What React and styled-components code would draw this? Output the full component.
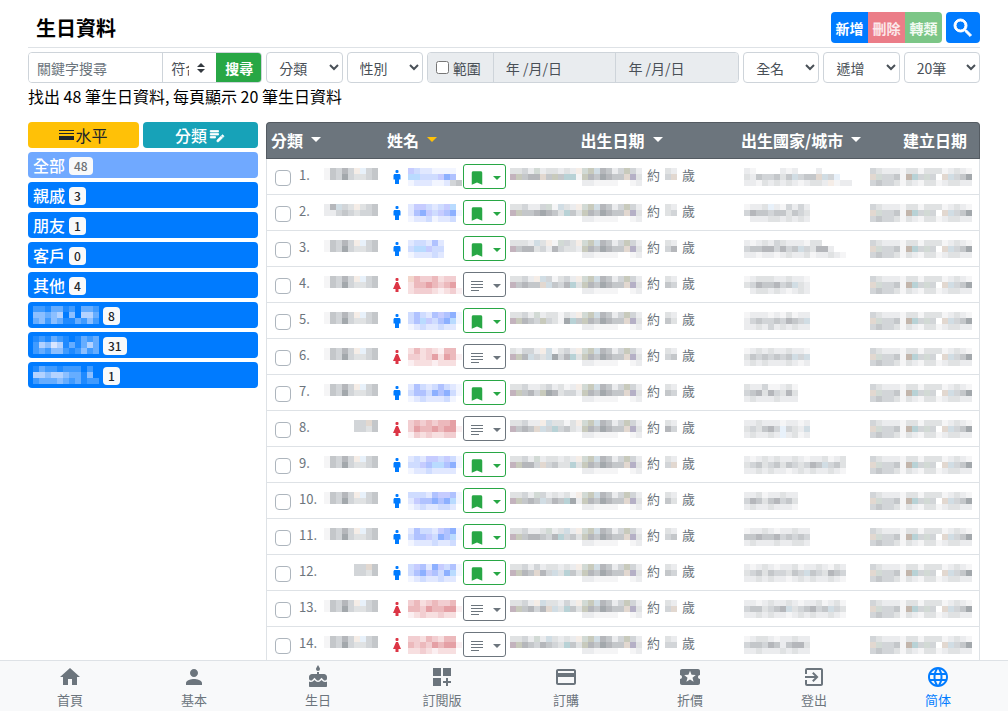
import styled, { createGlobalStyle, css } from "styled-components";
import {
  MdBookmark,
  MdCake,
  MdCreditCard,
  MdEditNote,
  MdExitToApp,
  MdHome,
  MdLanguage,
  MdLocalActivity,
  MdPerson,
  MdSearch,
} from "react-icons/md";

const GlobalStyle = createGlobalStyle`
  *, *::before, *::after {
    box-sizing: border-box;
  }

  body {
    margin: 0;
    background: #fff;
    color: #212529;
    font-family: "Noto Sans CJK TC", "Noto Sans", sans-serif;
    font-size: 16px;
    line-height: 24px;
  }

  button, input, select {
    font-family: inherit;
    margin: 0;
  }
`;

/* ---------- Layout ---------- */

const Page = styled.div`
  display: flex;
  flex-direction: column;
  height: 100vh;
`;

const Main = styled.main`
  flex: 1;
  min-height: 0;
  padding: 12px 28px 0;
  overflow-y: auto;
  scrollbar-width: none;
`;

const Header = styled.header`
  display: flex;
  align-items: center;
  gap: 4px;
  padding-bottom: 4px;
  border-bottom: 1px solid #dee2e6;
`;

const Title = styled.h1`
  flex: 1;
  margin: 0;
  padding-left: 8px;
  color: #000;
  font-size: 20px;
  font-weight: 700;
  line-height: 31px;
`;

const Content = styled.div`
  display: flex;
  align-items: flex-start;
  gap: 8px;
`;

/* ---------- Buttons ---------- */

const ButtonGroup = styled.div`
  display: flex;
  border-radius: 4px;
  overflow: hidden;
`;

/* Slightly heavier strokes; the icon's empty bounding path stays unstroked */
const boldIcon = css`
  & svg {
    stroke: none;
  }

  & svg path:not([fill="none"]) {
    stroke: currentColor;
    stroke-width: 1px;
  }
`;

const tones = {
  primary: css`
    background: #007bff;
    color: #fff;
  `,
  danger: css`
    background: #eb7d88;
    color: #fbe9eb;
  `,
  success: css`
    background: #7cc687;
    color: #f1faf2;
  `,
};

const ToolButton = styled.button`
  display: flex;
  align-items: center;
  justify-content: center;
  width: 37px;
  height: 31px;
  padding: 0;
  border: 0;
  font-size: 14px;
  font-weight: 700;
  ${(props) => tones[props.$tone]}

  ${ButtonGroup} & + & {
    border-left: 1px solid rgba(90, 90, 90, 0.3);
  }
`;

const SearchButton = styled(ToolButton)`
  width: 34px;
  border-radius: 4px;
  ${boldIcon}
`;

/* ---------- Filters ---------- */

const Filters = styled.form`
  display: flex;
  gap: 4px;
  margin-top: 4px;
`;

const InputGroup = styled.div`
  display: flex;
  flex: 1 1 ${(props) => props.$basis}px;
  min-width: 0;
  border: 1px solid #ced4da;
  border-radius: 4px;
  overflow: hidden;
`;

const TextInput = styled.input`
  flex: 1;
  min-width: 0;
  height: 29px;
  padding: 0 8px;
  border: 0;
  font-size: 14px;

  &::placeholder {
    color: #6c757d;
    opacity: 1;
  }
`;

const MatchSelect = styled.select`
  width: 55px;
  height: 29px;
  padding: 0 28px 0 8px;
  border: 0;
  border-left: 1px solid #ced4da;
  appearance: none;
  color: #495057;
  font-size: 14px;
  background: #fff
    url("data:image/svg+xml,%3csvg xmlns='http://www.w3.org/2000/svg' viewBox='0 0 4 5'%3e%3cpath fill='%23343a40' d='M2 0L0 2h4zm0 5L0 3h4z'/%3e%3c/svg%3e")
    no-repeat right 12px center / 8px 10px;
`;

const SubmitButton = styled.button`
  width: 46px;
  margin: -1px;
  border: 0;
  background: #28a745;
  color: #fff;
  font-size: 14px;
  font-weight: 700;
`;

const FilterSelect = styled.select`
  flex: 1 1 76px;
  min-width: 0;
  height: 31px;
  padding: 0 0 0 8px;
  border: 1px solid #ced4da;
  border-radius: 4px;
  background: #fff;
  color: #495057;
  font-size: 14px;
`;

const RangeLabel = styled.label`
  display: flex;
  align-items: center;
  gap: 4px;
  padding: 0 12px 0 8px;
  background: #e9ecef;
  color: #495057;
  font-size: 14px;

  & input {
    width: 13px;
    height: 13px;
  }
`;

const DateInput = styled.input`
  flex: 1;
  min-width: 0;
  height: 29px;
  padding: 0 12px;
  border: 0;
  border-left: 1px solid #ced4da;
  background: #e9ecef;
  color: #495057;
  font-size: 14px;
`;

const Summary = styled.p`
  margin: 1px 0 14px;
  color: #000;
`;

/* ---------- Sidebar ---------- */

const Sidebar = styled.aside`
  display: flex;
  flex: none;
  flex-direction: column;
  gap: 4px;
  width: 230px;
`;

const SidebarTools = styled.div`
  display: grid;
  grid-template-columns: 111px 1fr;
  gap: 4px;
`;

const SidebarTool = styled.button`
  display: flex;
  align-items: center;
  justify-content: center;
  gap: 1px;
  height: 26px;
  padding: 0;
  border: 0;
  border-radius: 4px;
  background: ${(props) => props.$bg};
  color: ${(props) => props.$color};
  font-size: 16px;
  font-weight: ${(props) => props.$weight};
  ${(props) => props.$weight > 400 && boldIcon}
`;

const Category = styled.button`
  display: flex;
  align-items: center;
  gap: 4px;
  height: 26px;
  padding: 0 5px;
  border: 0;
  border-radius: 4px;
  background: ${(props) => (props.$active ? "#70a9ff" : "#007bff")};
  color: #fff;
  font-size: 16px;
  font-weight: 500;
  line-height: 26px;
`;

const Badge = styled.span`
  margin-top: 2px;
  padding: 0 5px;
  border-radius: 4px;
  background: #f8f9fa;
  color: ${(props) => (props.$active ? "#6b6f73" : "#212529")};
  font-size: 12px;
  font-weight: 500;
  line-height: 18px;
`;

/* ---------- Table ---------- */

const Table = styled.table`
  flex: 1;
  min-width: 0;
  border-collapse: separate;
  border-spacing: 0;
  table-layout: fixed;
`;

const Col = styled.col`
  width: ${(props) => props.$width};
`;

const Th = styled.th`
  height: 37px;
  padding: 0 ${(props) => props.$right ?? 4}px 2px 4px;
  border-top: 1px solid #545b62;
  border-bottom: 1px solid #545b62;
  background: #6c757d;
  color: #fff;
  font-weight: 700;
  text-align: ${(props) => props.$align ?? "left"};
  white-space: nowrap;

  &:first-child {
    border-left: 1px solid #545b62;
    border-top-left-radius: 4px;
  }

  &:last-child {
    border-right: 1px solid #545b62;
    border-top-right-radius: 4px;
  }
`;

const SortButton = styled.button`
  display: inline-flex;
  align-items: center;
  gap: 8px;
  padding: 0;
  border: 0;
  background: none;
  color: inherit;
  font-size: 16px;
  font-weight: 700;
  line-height: 24px;
`;

const Caret = styled.span`
  border: ${(props) => props.$size}px solid transparent;
  border-top-color: ${(props) => props.$color ?? "currentColor"};
  border-bottom: 0;
`;

const Td = styled.td`
  height: 36px;
  padding: 0 0 0 ${(props) => props.$left}px;
  border-bottom: 1px solid #dee2e6;
  color: #6c757d;
  font-size: 13px;

  &:first-child {
    border-left: 1px solid #dee2e6;
  }

  &:last-child {
    border-right: 1px solid #dee2e6;
  }
`;

const Cell = styled.div`
  display: flex;
  align-items: center;
  gap: ${(props) => props.$gap ?? 0}px;
  height: 35px;
`;

const RowCheckbox = styled.input`
  appearance: none;
  width: 16px;
  height: 16px;
  margin: 3px 8px 0 0;
  border: 1px solid #adb5bd;
  border-radius: 4px;
  background: #fff;
`;

const RowNumber = styled.label`
  width: 25px;
  padding-bottom: 4px;
  line-height: 20px;
`;

const AgeText = styled.span`
  padding-bottom: 4px;
  line-height: 20px;
`;

const NameCell = styled(Cell)`
  & > svg:first-child {
    margin-right: 4px;
  }
`;

const MenuButton = styled.button`
  display: flex;
  align-items: center;
  gap: 7px;
  height: 25px;
  margin-left: 1px;
  padding: 2px 4px 0;
  border: 1px solid;
  border-radius: 3px;
  background: #fff;
  color: ${(props) => (props.$saved ? "#28a745" : "#6c757d")};
`;

const Pixels = styled.svg`
  display: block;
  flex: none;
`;

/* ---------- Bottom navigation ---------- */

const BottomNav = styled.nav`
  display: flex;
  flex: none;
  padding: 4px 8px 0;
  border-top: 1px solid #dee2e6;
  background: #f8f9fa;
`;

const NavLink = styled.a`
  display: flex;
  flex: 1;
  flex-direction: column;
  align-items: center;
  color: ${(props) => (props.$active ? "#007bff" : "#6c757d")};
  font-size: 13px;
  line-height: 22px;
  text-decoration: none;
`;

/* ---------- Masked values ---------- */

const palette = {
  a: "#f5f5f6",
  b: "#ebecee",
  c: "#e0e2e3",
  d: "#d2d5d8",
  e: "#c4c7ca",
  f: "#b5b7bb",
  g: "#a3a8ac",
  w: "#f5ede7",
  v: "#e2d8d0",
  u: "#c3b6ac",
  s: "#e8f1fa",
  t: "#d1dde4",
  r: "#b8d2d6",
  p: "#c3b3bd",
  q: "#b5b0c6",
  n: "#c8cabc",
  m: "#d2dad5",
  1: "#f2f5ff",
  2: "#e1e8ff",
  3: "#cfdcff",
  4: "#c6ccff",
  5: "#b0c2ff",
  6: "#8db0ff",
  7: "#b9dbff",
  A: "#fbeff1",
  B: "#f7dfe0",
  C: "#f2ced1",
  D: "#ecb9bc",
  E: "#e5a0a5",
  F: "#f3d6cc",
  h: "#1f8aff",
  i: "#409bff",
  j: "#66adff",
  k: "#8cbfff",
  l: "#b3d2ff",
  o: "#d9e6ff",
};

const CELL = 6;

function Mosaic({ lines }) {
  return (
    <Pixels
      width={lines[0].length * CELL}
      height={3 * CELL}
      shapeRendering="crispEdges"
      aria-hidden="true"
    >
      {lines.map((line, y) =>
        [...line].map(
          (key, x) =>
            palette[key] && (
              <rect
                key={`${x}-${y}`}
                x={x * CELL}
                y={y * CELL}
                width={CELL}
                height={CELL}
                fill={palette[key]}
              />
            )
        )
      )}
    </Pixels>
  );
}

/* ---------- Icons ---------- */

function PersonIcon({ female }) {
  return (
    <Pixels width="14" height="16" viewBox="0 0 14 16" aria-hidden="true">
      <rect
        x="5.5"
        y="1"
        width="3"
        height="3"
        rx="1"
        fill={female ? "#dc3545" : "#007bff"}
      />
      {female ? (
        <path fill="#dc3545" d="M6 5h2l3 7H8.500v3h-3v-3H3z" />
      ) : (
        <path
          fill="#007bff"
          d="M5 5h4c.9 0 1.500.6 1.500 1.500V10.500H9V15H5v-4.500H3.500V6.500C3.500 5.600 4.100 5 5 5z"
        />
      )}
    </Pixels>
  );
}

function LinesIcon() {
  return (
    <Pixels width="18" height="18" shapeRendering="crispEdges" aria-hidden="true">
      <path
        fill="currentColor"
        d="M3 4h12v1H3zM3 7h12v1H3zM3 10h12v1H3zM3 13h8v1H3z"
      />
    </Pixels>
  );
}

function WeightIcon() {
  return (
    <Pixels width="15" height="12" shapeRendering="crispEdges" aria-hidden="true">
      <path fill="currentColor" d="M0 1h15v1H0zM0 4h15v1H0zM0 7h15v4H0z" />
    </Pixels>
  );
}

function WidgetsAddIcon() {
  return (
    <svg width="24" height="24" viewBox="0 0 24 24" fill="currentColor" aria-hidden="true">
      <path d="M3 3h8v8H3zM13 3h8v8h-8zM3 13h8v8H3zM18 13h-2v3h-3v2h3v3h2v-3h3v-2h-3z" />
    </svg>
  );
}

/* ---------- Data ---------- */

const categories = [
  { name: "全部", count: 48, active: true },
  { name: "親戚", count: 3 },
  { name: "朋友", count: 1 },
  { name: "客戶", count: 0 },
  { name: "其他", count: 4 },
  { mask: ["iihjjhi.jji", "kkjkl.k.llj", "jkikjhhjiki"], count: 8 },
  { mask: ["hihjih.hjij", "ilkolhjhjlj", "ijikkihikij"], count: 31 },
  { mask: ["hjiihiii.i.", "llkllkjjhk.", "ijjjkjijhii"], count: 1 },
];

const groupLong = ["aedfdwsde", "aedgdccde"];
const groupAlt = ["bftdcwcde", "bbdedcdde"];
const groupShort = [".....ddve", ".....ddce"];

const dateTail = ["mntfebdndb", "nfegfeevqc", "bbaaaa..ab"];
const created = ["dcbbbaccacccabcba", "vmddeaurdmd.vtdeg", "deddcacbaccabccbb"];

const people = [
  {
    group: groupLong,
    name: ["43221111.", "77333465.", "1222112de"],
    date: ["ccdbmbccbcbw", "pneffvenerra"],
    age: ["cb", "dv"],
    place: ["ba....bab...b.....", "cbeddecetdeevtds..", "bbacbcbcbabccbwabb"],
  },
  {
    group: groupAlt,
    name: ["24432347.", "256434561", "12231223."],
    date: ["ccdbbdmatcbw", "pneefgfecrec"],
    age: ["cb", "cd"],
    place: ["abbcsbadbdb", "dfeedeecedc", ".bbbccbcbcb"],
  },
  {
    group: groupLong,
    name: ["233252...", "377433...", "122232..."],
    date: ["cccbtcwamdcw", "peffcdbfdccb"],
    age: ["cb", "df"],
    place: ["babcbdcbbbacc....", "deeffdfdetdcffb..", "bbabbabcbbcabbcba"],
  },
  {
    group: groupLong,
    female: true,
    name: ["FDCCDBCC.", "BDDEDCDE.", "BCCCBABCA"],
    date: ["ccdbwtdacdbw", "pefeevtedfrc"],
    age: ["cb", "ed"],
    place: ["abcccbbcbba", "cdfeefdetcb", ".bccbcbabcb"],
  },
  {
    group: groupLong,
    name: ["353254561", "357435671", "12322322."],
    date: ["ccdbmbccacbw", "pnfedndcagre"],
    age: ["cb", "ec"],
    place: ["abbbabacabb", "bdeddedfedt", "bbcbdbcbcbb"],
  },
  {
    group: groupLong,
    female: true,
    name: ["BDBCBADD.", "CCBCEBEDA", "ABBBABBB."],
    date: ["cbddbwtacdbw", "pnftdctgdfrc"],
    age: ["cb", "de"],
    place: ["abcbcbbcbba", "cedededetdt", "bcbcbbbcbab"],
  },
  {
    group: groupLong,
    name: ["253235321", "355365631", "12322231."],
    date: ["ccdbbcdbcabw", "pnefdngfcddb"],
    age: ["cb", "ed"],
    place: ["cbbdaabca", "defcfdcfc", "bcbbbcbbb"],
  },
  {
    group: groupShort,
    female: true,
    name: ["CDCDCDDE.", "CEDDEDEEA", "ACBCBBCC."],
    date: ["ccdbbwtccacw", "pefevtdrdecb"],
    age: ["cb", "fd"],
    place: ["bbcbbbabbab", "cdcefdsdcbt", "bcbbcbsbcab"],
  },
  {
    group: groupLong,
    name: ["232443431", "334577561", "12232222."],
    date: ["ccdbmbccbcbw", "pnffdvdeccrc"],
    age: ["cb", "dv"],
    place: ["babcbcbbcbabbcabc", "cdecdecedcdfetdec", "bbcbcbbabcbcbbcba"],
  },
  {
    group: groupLong,
    name: ["333254451", "245565671", "12322332."],
    date: ["ccdbmdbcbcaw", "pnefetdfergb"],
    age: ["cb", "ec"],
    place: ["bbcabbcbb", "dfecefdec", "bcbbcbbba"],
  },
  {
    group: groupLong,
    name: ["253324561", "355436571", "12223223."],
    date: ["ccdbbcmbctbw", "pneffedfrdec"],
    age: ["cb", "de"],
    place: ["abbcbabbcbb", "eefeefdeded", "bcbbbcbbccb"],
  },
  {
    group: groupShort,
    name: ["345264351", "356453671", "12322322."],
    date: ["ccdbdbccbcbw", "pnfevfdtcrec"],
    age: ["cb", "ed"],
    place: ["babcbabbcabbcbacb", "cdeceddcedtedcfed", "bbcbcbbabcbcbbcba"],
  },
  {
    group: groupLong,
    female: true,
    name: ["CDBCDCCD.", "DDCEDDEEA", "ABCBBCBB."],
    date: ["ccdbwtccbdbw", "pnefdfvtcrec"],
    age: ["cb", "dv"],
    place: ["bbabcbbcbabbcabca", "deecdeftcdefdetdc", "bbcbcbbabcbcbbcba"],
  },
  {
    group: groupLong,
    female: true,
    name: ["CCBDCBDD.", "DCDCEDEEA", "BBCBABBB."],
    date: ["ccdbmbtcbcbw", "pnfedfedcrec"],
    age: ["cb", "dd"],
    place: ["abccbabbcbb", "deedfebeffc", "bbcbbbcbcbb"],
  },
];

const columns = [
  { label: "分類", sortable: true },
  { label: "姓名", sortable: true, caret: "#ffc107" },
  { label: "出生日期", sortable: true, align: "center" },
  { label: "出生國家/城市", sortable: true },
  { label: "建立日期", align: "right", right: 12 },
];

const navItems = [
  { label: "首頁", icon: MdHome },
  { label: "基本", icon: MdPerson },
  { label: "生日", icon: MdCake },
  { label: "訂閱版", icon: WidgetsAddIcon },
  { label: "訂購", icon: MdCreditCard },
  { label: "折價", icon: MdLocalActivity },
  { label: "登出", icon: MdExitToApp },
  { label: "简体", icon: MdLanguage, active: true },
];

/* ---------- Components ---------- */

function SearchFilters() {
  return (
    <Filters onSubmit={(e) => e.preventDefault()}>
      <InputGroup $basis={234}>
        <TextInput type="text" placeholder="關鍵字搜尋" aria-label="關鍵字搜尋" />
        <MatchSelect aria-label="符合">
          <option>符合</option>
        </MatchSelect>
        <SubmitButton type="submit">搜尋</SubmitButton>
      </InputGroup>
      <FilterSelect aria-label="分類">
        <option>分類</option>
      </FilterSelect>
      <FilterSelect aria-label="性別">
        <option>性別</option>
      </FilterSelect>
      <InputGroup $basis={312}>
        <RangeLabel>
          <input type="checkbox" />
          範圍
        </RangeLabel>
        <DateInput type="text" defaultValue="年 /月/日" aria-label="開始日期" disabled />
        <DateInput type="text" defaultValue="年 /月/日" aria-label="結束日期" disabled />
      </InputGroup>
      <FilterSelect aria-label="名稱">
        <option>全名</option>
      </FilterSelect>
      <FilterSelect aria-label="排序">
        <option>遞增</option>
      </FilterSelect>
      <FilterSelect aria-label="每頁筆數">
        <option>20筆</option>
      </FilterSelect>
    </Filters>
  );
}

function CategoryList() {
  return (
    <Sidebar>
      <SidebarTools>
        <SidebarTool type="button" $bg="#ffc107" $color="#212529" $weight={400}>
          <WeightIcon />
          水平
        </SidebarTool>
        <SidebarTool type="button" $bg="#17a2b8" $color="#fff" $weight={500}>
          分類
          <MdEditNote size={18} />
        </SidebarTool>
      </SidebarTools>
      {categories.map(({ name, mask, count, active }, i) => (
        <Category key={i} type="button" $active={active}>
          {mask ? <Mosaic lines={mask} /> : name}
          <Badge $active={active}>{count}</Badge>
        </Category>
      ))}
    </Sidebar>
  );
}

function PersonRow({ person, number }) {
  const { group, female, name, date, age, place } = person;
  const id = `person-${number}`;

  return (
    <tr>
      <Td $left={8}>
        <Cell>
          <RowCheckbox type="checkbox" id={id} />
          <RowNumber htmlFor={id}>{number}.</RowNumber>
          <Mosaic lines={group} />
        </Cell>
      </Td>
      <Td $left={7}>
        <NameCell>
          <PersonIcon female={female} />
          <Mosaic lines={name} />
          <MenuButton type="button" $saved={!female} aria-label="選單">
            {female ? <LinesIcon /> : <MdBookmark size={18} />}
            <Caret $size={4} />
          </MenuButton>
        </NameCell>
      </Td>
      <Td $left={4}>
        <Cell $gap={5}>
          <Mosaic lines={dateTail.map((tail, i) => (date[i] ?? "............") + tail)} />
          <AgeText>約</AgeText>
          <Mosaic lines={age} />
          <AgeText>歲</AgeText>
        </Cell>
      </Td>
      <Td $left={7}>
        <Mosaic lines={place} />
      </Td>
      <Td $left={4}>
        <Mosaic lines={created} />
      </Td>
    </tr>
  );
}

function BirthdayTable() {
  return (
    <Table>
      <colgroup>
        <Col $width="117px" />
        <Col $width="123px" />
        <Col />
        <Col $width="129px" />
        <Col $width="114px" />
      </colgroup>
      <thead>
        <tr>
          {columns.map(({ label, sortable, caret, align, right }) => (
            <Th key={label} $align={align} $right={right}>
              {sortable ? (
                <SortButton type="button">
                  {label}
                  <Caret $size={5} $color={caret} />
                </SortButton>
              ) : (
                label
              )}
            </Th>
          ))}
        </tr>
      </thead>
      <tbody>
        {people.map((person, i) => (
          <PersonRow key={i} person={person} number={i + 1} />
        ))}
      </tbody>
    </Table>
  );
}

function App() {
  return (
    <>
      <GlobalStyle />
      <Page>
        <Main>
          <Header>
            <Title>生日資料</Title>
            <ButtonGroup>
              <ToolButton type="button" $tone="primary">
                新增
              </ToolButton>
              <ToolButton type="button" $tone="danger" disabled>
                刪除
              </ToolButton>
              <ToolButton type="button" $tone="success" disabled>
                轉類
              </ToolButton>
            </ButtonGroup>
            <SearchButton type="button" $tone="primary" aria-label="搜尋">
              <MdSearch size={24} />
            </SearchButton>
          </Header>
          <SearchFilters />
          <Summary>找出 48 筆生日資料, 每頁顯示 20 筆生日資料</Summary>
          <Content>
            <CategoryList />
            <BirthdayTable />
          </Content>
        </Main>
        <BottomNav>
          {navItems.map(({ label, icon: Icon, active }) => (
            <NavLink key={label} href="#" $active={active}>
              <Icon size={24} />
              {label}
            </NavLink>
          ))}
        </BottomNav>
      </Page>
    </>
  );
}

export default App;
